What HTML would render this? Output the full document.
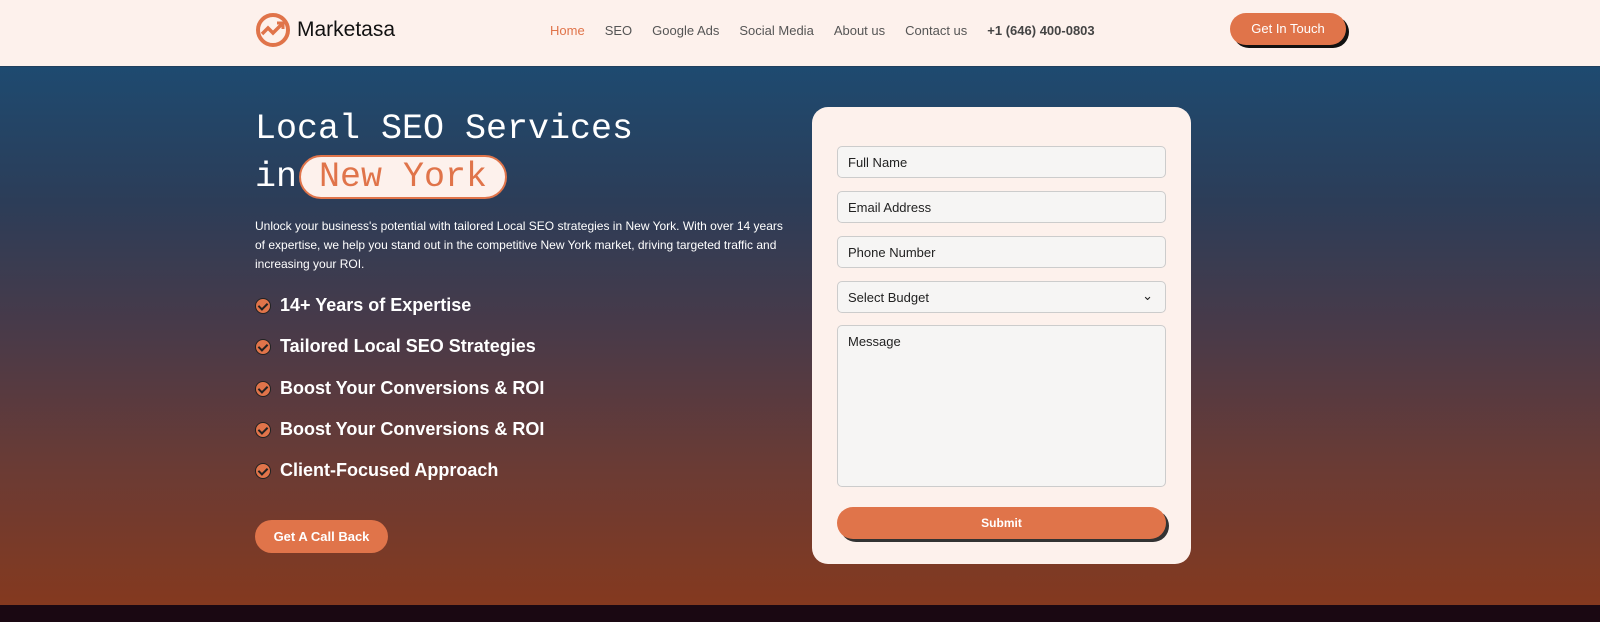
<!DOCTYPE html>
<html><head><meta charset="utf-8"><style>
*{margin:0;padding:0;box-sizing:border-box}
body{width:1600px;height:622px;overflow:hidden;font-family:"Liberation Sans",sans-serif;background:#1a0812}
.nav{position:absolute;top:0;left:0;width:1600px;height:67px;background:#fdf1ec;border-bottom:1px solid #20405e}
.logo{position:absolute;left:255px;top:12px;display:flex;align-items:center;gap:6px;font-size:21px;color:#111}
.menu{position:absolute;top:23px;left:550px;font-size:13px;color:#555;display:flex;gap:20px}
.menu .a{color:#e0744a}
.menu b{color:#444}
.gt{position:absolute;left:1230px;top:13px;width:116px;height:32px;border-radius:16px;background:#e0744a;color:#fff;font-size:13px;text-align:center;line-height:32px;box-shadow:3px 3px 0 #111}
.hero{position:absolute;top:67px;left:0;width:1600px;height:538px;background:linear-gradient(180deg,#1e4a70 0%,#2c3d58 25%,#4a3a48 50%,#6b3b34 75%,#84391f 100%)}
h1{position:absolute;left:255px;top:105px;font-family:"Liberation Mono",monospace;font-weight:normal;color:#fff;font-size:35px;line-height:48px}
.ny{display:inline-block;background:#fdf1ec;color:#e0744a;border:2px solid #e0744a;border-radius:22px;padding:0 18px;line-height:40px;margin-left:2px}
.p{position:absolute;left:255px;top:217px;width:540px;color:#fff;font-size:12px;line-height:19px}
.list{position:absolute;left:255px;top:295px;color:#fff;font-size:18px;font-weight:bold}
.list div{height:41.3px;display:flex;align-items:flex-start;gap:9px}
.ck{width:16px;height:16px;border-radius:50%;background:#e0744a;border:1px solid #222;margin-top:3px;position:relative}
.ck:after{content:"";position:absolute;left:4px;top:2px;width:4px;height:7px;border:solid #222;border-width:0 2px 2px 0;transform:rotate(45deg)}
.cb{position:absolute;left:255px;top:520px;width:133px;height:33px;border-radius:17px;background:#e0744a;color:#fff;font-weight:bold;font-size:13px;text-align:center;line-height:33px}
.form{position:absolute;left:812px;top:107px;width:379px;height:457px;background:#fdf1ec;border-radius:16px}
.in{position:absolute;left:25px;width:329px;height:32px;background:#f6f5f4;border:1px solid #ccc;border-radius:5px;font-size:13px;color:#222;padding:8px 10px}
.sub{position:absolute;left:25px;top:400px;width:329px;height:32px;border-radius:16px;background:#e0744a;color:#fff;font-weight:bold;font-size:12px;text-align:center;line-height:32px;box-shadow:3px 3px 0 #333}
</style></head><body>
<div class="nav">
<div class="logo"><svg width="36" height="36" viewBox="0 0 36 36"><circle cx="18" cy="18" r="15" fill="none" stroke="#e0744a" stroke-width="4"/><path d="M7 22l6-6 5 5 9-9" fill="none" stroke="#e0744a" stroke-width="3.5"/><path d="M22 11h6v6" fill="none" stroke="#e0744a" stroke-width="3"/></svg>Marketasa</div>
<div class="menu"><span class="a">Home</span><span>SEO</span><span>Google Ads</span><span>Social Media</span><span>About us</span><span>Contact us</span><b>+1 (646) 400-0803</b></div>
<div class="gt">Get In Touch</div>
</div>
<div class="hero"></div>
<h1>Local SEO Services<br>in<span class="ny">New York</span></h1>
<div class="p">Unlock your business's potential with tailored Local SEO strategies in New York. With over 14 years of expertise, we help you stand out in the competitive New York market, driving targeted traffic and increasing your ROI.</div>
<div class="list">
<div><span class="ck"></span>14+ Years of Expertise</div>
<div><span class="ck"></span>Tailored Local SEO Strategies</div>
<div><span class="ck"></span>Boost Your Conversions &amp; ROI</div>
<div><span class="ck"></span>Boost Your Conversions &amp; ROI</div>
<div><span class="ck"></span>Client-Focused Approach</div>
</div>
<div class="cb">Get A Call Back</div>
<div class="form">
<div class="in" style="top:39px">Full Name</div>
<div class="in" style="top:84px">Email Address</div>
<div class="in" style="top:129px">Phone Number</div>
<div class="in" style="top:174px">Select Budget<span style="position:absolute;right:12px;top:6px">&#8964;</span></div>
<div class="in" style="top:218px;height:162px">Message</div>
<div class="sub">Submit</div>
</div>
</body></html>
